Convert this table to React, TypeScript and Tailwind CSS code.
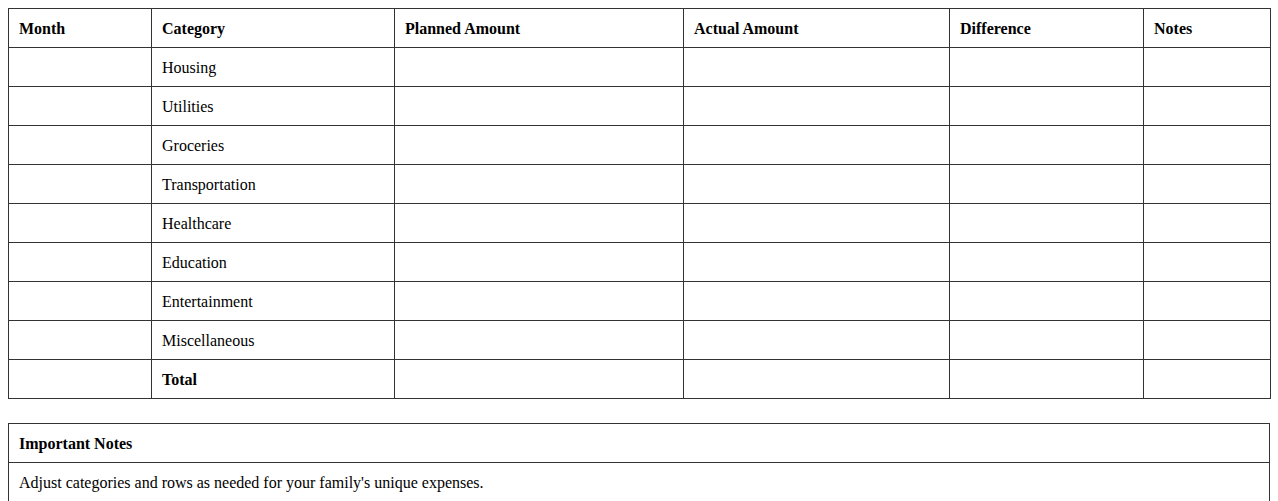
import React from "react";

const cats = ["Housing","Utilities","Groceries","Transportation","Healthcare","Education","Entertainment","Miscellaneous"];
const cols = [
  { name: "Month", w: "w-[143px]" },
  { name: "Category", w: "w-[243px]" },
  { name: "Planned Amount", w: "w-[289px]" },
  { name: "Actual Amount", w: "w-[266px]" },
  { name: "Difference", w: "w-[194px]" },
  { name: "Notes", w: "w-[127px]" },
];

export default function App() {
  const cell = "border border-[#333] px-[10px] h-[39px] pt-[2px] pb-0 text-left align-middle";
  return (
    <div className="p-[8px] bg-white text-black text-[16px]" style={{ fontFamily: '"Liberation Serif", "Times New Roman", serif' }}>
      <table className="w-full border-collapse table-fixed">
        <colgroup>
          {cols.map((c) => <col key={c.name} className={c.w} />)}
        </colgroup>
        <thead>
          <tr>
            {cols.map((c) => <th key={c.name} className={cell + " font-bold"}>{c.name}</th>)}
          </tr>
        </thead>
        <tbody>
          {cats.map((c) => (
            <tr key={c}>
              <td className={cell}></td>
              <td className={cell}>{c}</td>
              <td className={cell}></td>
              <td className={cell}></td>
              <td className={cell}></td>
              <td className={cell}></td>
            </tr>
          ))}
          <tr>
            <td className={cell}></td>
            <td className={cell + " font-bold"}>Total</td>
            <td className={cell}></td>
            <td className={cell}></td>
            <td className={cell}></td>
            <td className={cell}></td>
          </tr>
        </tbody>
      </table>
      <table className="w-full border-collapse mt-[24px]">
        <thead>
          <tr><th className={cell + " font-bold"}>Important Notes</th></tr>
        </thead>
        <tbody>
          <tr><td className={cell}>Adjust categories and rows as needed for your family's unique expenses.</td></tr>
        </tbody>
      </table>
    </div>
  );
}
